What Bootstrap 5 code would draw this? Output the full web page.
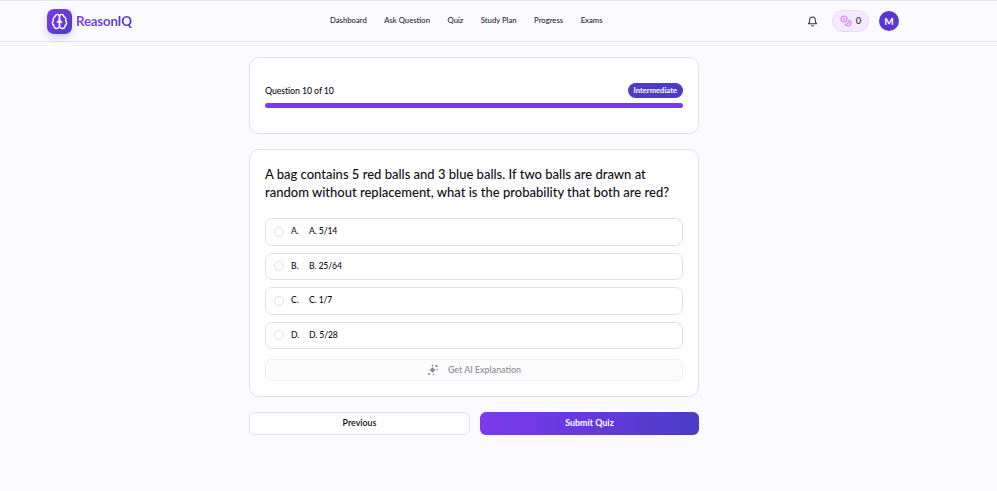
<!DOCTYPE html>
<html lang="en">
<head>
    <meta charset="UTF-8">
    <meta name="viewport" content="width=device-width, initial-scale=1.0">
    <title>ReasonIQ Quiz</title>
    <link href="https://cdn.jsdelivr.net/npm/bootstrap@5.3.0/dist/css/bootstrap.min.css" rel="stylesheet">
    <style>
        body {
            background-color: #fbfaff;
            font-family: Lato, "Noto Sans", sans-serif;
            color: #0f0e17;
            min-height: 491px;
        }
        .page-wrap {
            width: 948px;
        }
        .top-bar {
            height: 42px;
            border-top: 1px solid #e2e6ef;
            border-bottom: 1px solid #e2e0ea;
        }
        .top-inner {
            padding: 0 49px 0 47px;
        }
        .logo-box {
            width: 25px;
            height: 25px;
            border-radius: 7px;
            background: linear-gradient(135deg, #7c3aed, #4f3bc4);
            box-shadow: 0 3px 7px rgba(79, 59, 196, .25);
        }
        .logo-text {
            font-size: 13.4px;
            font-weight: 700;
            letter-spacing: -.25px;
            background: linear-gradient(90deg, #7c3aed, #4f3bc4);
            -webkit-background-clip: text;
            background-clip: text;
            color: transparent;
        }
        .top-links {
            gap: 17.5px;
            left: 330px;
        }
        .top-link {
            font-size: 7.7px;
            font-weight: 500;
            color: #1f1d2b;
            text-decoration: none;
        }
        .coin-pill {
            width: 37px;
            height: 22px;
            margin: 0 10px 0 14px;
            border-radius: 11px;
            background: #f6e9fe;
            border: 1px solid #ecd5fb;
            font-size: 9.5px;
            font-weight: 600;
            color: #3d3a4a;
        }
        .avatar-dot {
            width: 20px;
            height: 20px;
            border-radius: 50%;
            background: #5b35d0;
            color: #fff;
            font-size: 10px;
            font-weight: 700;
        }
        .quiz-col {
            width: 450px;
            margin: 15px auto 0;
        }
        .panel-box {
            background: #fff;
            border: 1px solid #e2e0ea;
            border-radius: 10px;
            padding: 0 15px;
        }
        .progress-panel {
            height: 77px;
            margin-bottom: 15px;
            padding-top: 25px;
        }
        .q-count {
            font-size: 8.8px;
            font-weight: 500;
            letter-spacing: -.1px;
        }
        .level-tag {
            height: 15px;
            padding: 0 6px;
            border-radius: 8px;
            background: #4f3bc4;
            color: #fff;
            font-size: 7.6px;
            font-weight: 700;
        }
        .bar-track {
            height: 5px;
            margin-top: 5px;
            border-radius: 3px;
            background: #7c3aed;
        }
        .question-panel {
            height: 248px;
            padding-top: 15px;
        }
        .q-text {
            font-size: 13px;
            font-weight: 500;
            line-height: 18px;
            margin-bottom: 17px;
        }
        .answer-row {
            height: 27.5px;
            margin-bottom: 7px;
            padding: 0 8px;
            border: 1px solid #e2e0ea;
            border-radius: 7px;
            font-size: 8.6px;
            font-weight: 500;
            letter-spacing: -.1px;
        }
        .radio-ring {
            width: 10px;
            height: 10px;
            margin-right: 7px;
            border: 1px solid #e2e0ea;
            border-radius: 50%;
        }
        .answer-key {
            width: 18px;
        }
        .explain-btn {
            height: 22px;
            margin-top: 10px;
            gap: 9px;
            border: 1px solid #efeef5;
            border-radius: 6px;
            background: #fcfcfe;
            color: #8c8a94;
            font-size: 8.9px;
            font-weight: 500;
        }
        .foot-btns {
            margin-top: 15px;
            gap: 10px;
        }
        .foot-btn {
            height: 23px;
            padding: 0;
            border-radius: 6px;
            font-size: 8.9px;
            font-weight: 700;
            line-height: 1;
        }
        .prev-btn {
            width: 221px;
            background: #fff;
            border: 1.5px solid #e2e0ea;
            color: #0f0e17;
            font-weight: 600;
        }
        .submit-btn {
            width: 219px;
            border: 0;
            background: linear-gradient(90deg, #7c3aed, #4b3bc8);
            color: #fff;
        }
    </style>
</head>
<body>
    <nav class="top-bar">
        <div class="page-wrap top-inner h-100 d-flex align-items-center justify-content-between position-relative">
            <a href="#" class="d-flex align-items-center gap-1 text-decoration-none">
                <span class="logo-box d-flex align-items-center justify-content-center">
                    <svg width="17" height="17" viewBox="0 0 24 24" fill="none" stroke="#fff" stroke-width="2" stroke-linecap="round" stroke-linejoin="round">
                        <path d="M12 5a3 3 0 1 0-5.997.125 4 4 0 0 0-2.526 5.77 4 4 0 0 0 .556 6.588A4 4 0 1 0 12 18Z"/>
                        <path d="M12 5a3 3 0 1 1 5.997.125 4 4 0 0 1 2.526 5.77 4 4 0 0 1-.556 6.588A4 4 0 1 1 12 18Z"/>
                        <path d="M15 13a4.500 4.500 0 0 1-3-4 4.500 4.500 0 0 1-3 4"/>
                    </svg>
                </span>
                <span class="logo-text">ReasonIQ</span>
            </a>
            <div class="top-links d-flex position-absolute">
                <a href="#" class="top-link">Dashboard</a>
                <a href="#" class="top-link">Ask Question</a>
                <a href="#" class="top-link">Quiz</a>
                <a href="#" class="top-link">Study Plan</a>
                <a href="#" class="top-link">Progress</a>
                <a href="#" class="top-link">Exams</a>
            </div>
            <div class="d-flex align-items-center">
                <svg width="11" height="11" viewBox="0 0 24 24" fill="none" stroke="#3a3846" stroke-width="2.200" stroke-linecap="round" stroke-linejoin="round">
                    <path d="M6 8a6 6 0 0 1 12 0c0 7 3 9 3 9H3s3-2 3-9"/>
                    <path d="M10.300 21a2 2 0 0 0 3.400 0"/>
                </svg>
                <div class="coin-pill d-flex align-items-center justify-content-center gap-1">
                    <svg width="12" height="12" viewBox="0 0 24 24" fill="none" stroke="#d67df0" stroke-width="2.400" stroke-linecap="round" stroke-linejoin="round">
                        <circle cx="8" cy="8" r="6"/>
                        <path d="M18.090 10.370A6 6 0 1 1 10.340 18"/>
                        <path d="M7 6h1v4"/>
                        <path d="m16.710 13.880.7.71-2.820 2.820"/>
                    </svg>
                    <span>0</span>
                </div>
                <div class="avatar-dot d-flex align-items-center justify-content-center">M</div>
            </div>
        </div>
    </nav>

    <div class="page-wrap">
        <main class="quiz-col">
            <section class="panel-box progress-panel">
                <div class="d-flex align-items-center justify-content-between">
                    <span class="q-count">Question 10 of 10</span>
                    <span class="level-tag d-flex align-items-center">Intermediate</span>
                </div>
                <div class="bar-track"></div>
            </section>

            <section class="panel-box question-panel">
                <p class="q-text">A bag contains 5 red balls and 3 blue balls. If two balls are drawn at random without replacement, what is the probability that both are red?</p>
                <div class="answer-row d-flex align-items-center"><span class="radio-ring"></span><span class="answer-key">A.</span><span>A. 5/14</span></div>
                <div class="answer-row d-flex align-items-center"><span class="radio-ring"></span><span class="answer-key">B.</span><span>B. 25/64</span></div>
                <div class="answer-row d-flex align-items-center"><span class="radio-ring"></span><span class="answer-key">C.</span><span>C. 1/7</span></div>
                <div class="answer-row d-flex align-items-center"><span class="radio-ring"></span><span class="answer-key">D.</span><span>D. 5/28</span></div>
                <div class="explain-btn d-flex align-items-center justify-content-center">
                    <svg width="12" height="12" viewBox="0 0 24 24" fill="#8c8a94">
                        <rect x="7" y="8" width="8" height="8" transform="rotate(45 11 12)"/>
                        <circle cx="19" cy="4" r="2.500"/>
                        <circle cx="20" cy="11" r="1.600"/>
                        <circle cx="11" cy="3" r="1.800"/>
                        <circle cx="4" cy="20" r="2.200"/>
                        <circle cx="13" cy="21" r="1.600"/>
                    </svg>
                    <span>Get AI Explanation</span>
                </div>
            </section>

            <div class="foot-btns d-flex">
                <button type="button" class="btn foot-btn prev-btn">Previous</button>
                <button type="button" class="btn foot-btn submit-btn">Submit Quiz</button>
            </div>
        </main>
    </div>
    <script src="https://cdn.jsdelivr.net/npm/bootstrap@5.3.0/dist/js/bootstrap.bundle.min.js"></script>
</body>
</html>
